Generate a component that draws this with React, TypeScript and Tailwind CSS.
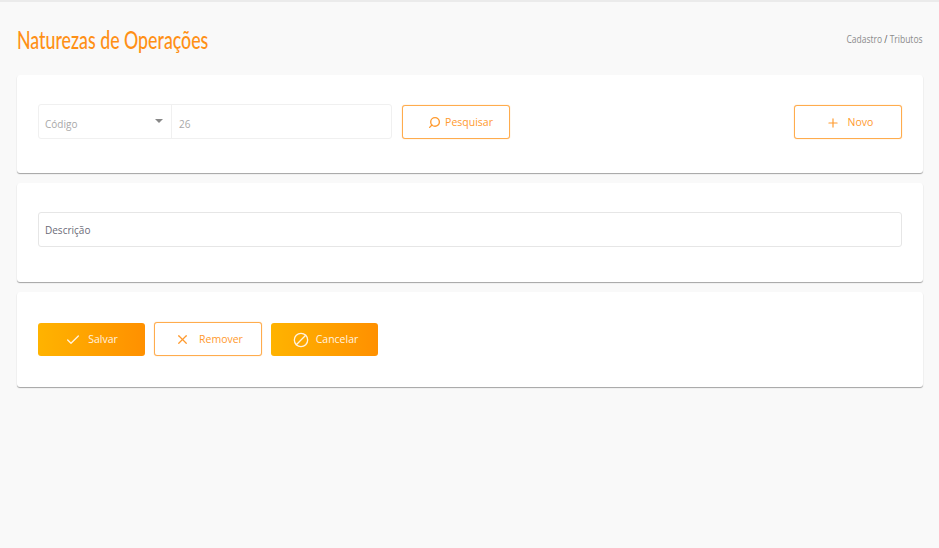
import { Check, Plus, X, Ban, Search } from 'lucide-react'

const body = "font-['Open_Sans','Noto_Sans',sans-serif]"

function Card({ children, className }: { children: React.ReactNode; className: string }) {
  return (
    <section className={`rounded-[3px] bg-white pr-[21px] pl-[21px] shadow-[0_1px_1px_rgba(0,0,0,0.35)] ${className}`}>
      {children}
    </section>
  )
}

function OutlineButton({ children, className = '' }: { children: React.ReactNode; className?: string }) {
  return (
    <button className={`flex h-[34px] w-[108px] items-center justify-center rounded-[3px] border border-[#ffac4d] bg-white pt-[1px] text-[10.5px] font-medium text-[#ff9a2e] shadow-[0_0_1px_#ffb561] ${className}`}>
      {children}
    </button>
  )
}

function SolidButton({ children, className = '' }: { children: React.ReactNode; className?: string }) {
  return (
    <button className={`flex h-[33px] w-[107px] items-center justify-center rounded-[3px] bg-gradient-to-r from-[#ffb300] to-[#ff9000] pt-[1px] text-[10.5px] font-medium text-[#fff3e0] ${className}`}>
      {children}
    </button>
  )
}

export default function App() {
  return (
    <div className={`min-h-[548px] border-t-2 border-[#ebebeb] bg-[#f9f9f9] pr-[16px] pl-[17px] ${body}`}>
      <header className="flex h-[73px] items-center justify-between pt-[2px]">
        <h1 className="origin-left scale-x-[0.74] font-['Lato',sans-serif] text-[24px] font-medium whitespace-nowrap text-[#ff9016]">
          Naturezas de Operações
        </h1>
        <p className="origin-right scale-x-[0.85] text-[10px] text-[#8c8c8c]">
          Cadastro <span className="text-[#555]">/</span> Tributos
        </p>
      </header>

      <Card className="flex h-[98px] items-center pb-[5px]">
        <div className="flex h-[35px] w-[354px] rounded-[3px] border border-[#f0f0f0] text-[10px] text-[#a8a8a8]">
          <div className="relative flex w-[133px] items-center border-r border-[#f0f0f0] pt-[5px] pl-[6px]">
            Código
            <span className="absolute top-[14px] right-[8px] h-0 w-0 border-x-[4px] border-t-[4px] border-x-transparent border-t-[#888]" />
          </div>
          <div className="flex flex-1 items-center pt-[5px] pl-[7px]">26</div>
        </div>
        <OutlineButton className="ml-[10px] pt-[2px] pl-[9px]">
          <Search size={13} strokeWidth={2.5} className="mr-[4px] -scale-x-100" />
          Pesquisar
        </OutlineButton>
        <OutlineButton className="ml-auto w-[107px] pt-[2px] pl-[3px]">
          <Plus size={14} strokeWidth={2} className="mr-[8px]" />
          Novo
        </OutlineButton>
      </Card>

      <Card className="mt-[10px] flex h-[99px] items-center pb-[6px]">
        <div className="flex h-[35px] w-full items-center rounded-[3px] border border-[#e6e6e6] pt-[2px] pl-[6px] text-[10px] text-[#6b6b78]">
          Descrição
        </div>
      </Card>

      <Card className="mt-[10px] flex h-[95px] items-center gap-[9px] pb-[1px]">
        <SolidButton>
          <Check size={16} strokeWidth={2} className="mr-[7px]" />
          Salvar
        </SolidButton>
        <OutlineButton className="pl-[2px]">
          <X size={15} strokeWidth={2} className="mr-[9px]" />
          Remover
        </OutlineButton>
        <SolidButton className="pl-[2px]">
          <Ban size={16} strokeWidth={2} className="mr-[7px] -scale-x-100" />
          Cancelar
        </SolidButton>
      </Card>
    </div>
  )
}
